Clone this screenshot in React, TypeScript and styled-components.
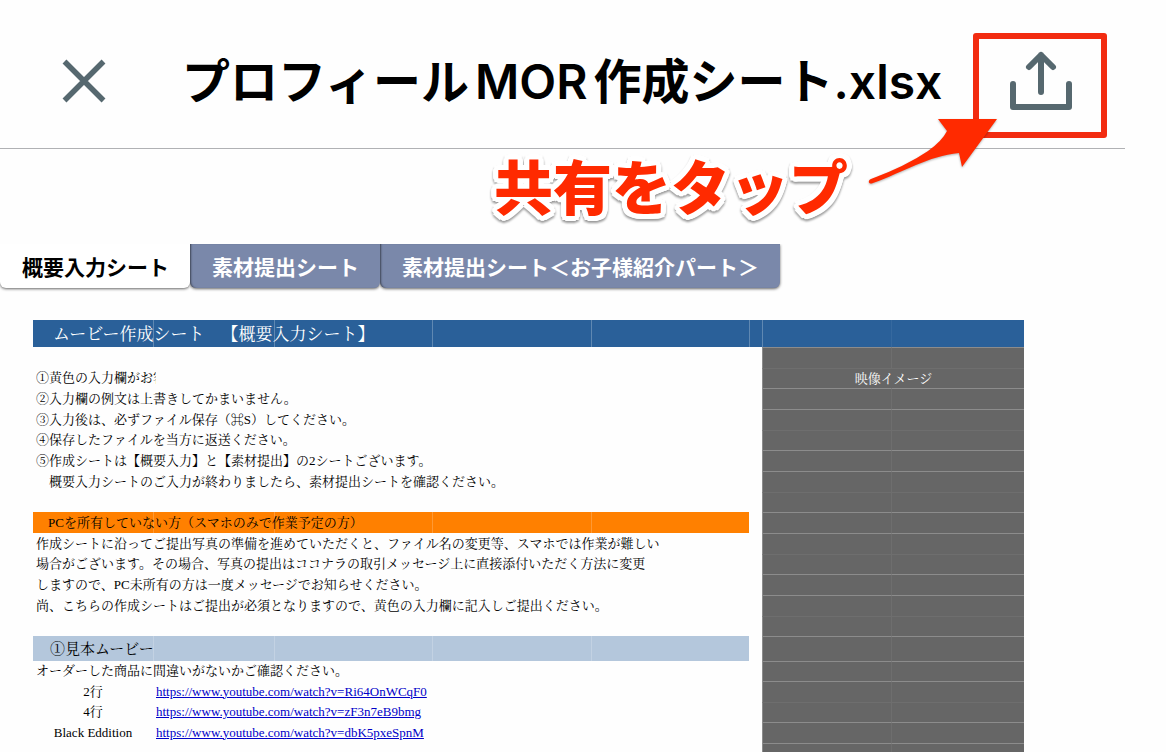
import React from "react";
import styled, { createGlobalStyle, css } from "styled-components";

const sans = `"Inter", "Noto Sans CJK JP", sans-serif`;
const serif = `"Liberation Serif", "Noto Serif CJK JP", "Noto Sans CJK JP", serif`;

const outline = Array.from({ length: 24 }, (_, i) => {
  const angle = (i * Math.PI) / 12;
  return `${Math.round(5 * Math.cos(angle))}px ${Math.round(5 * Math.sin(angle))}px 0 #fff`;
}).join(", ");

const GlobalStyle = createGlobalStyle`
  *, *::before, *::after { box-sizing: border-box; }
  body { margin: 0; background: #fefefe; color: #000; font-family: ${sans}; }
`;

const Page = styled.div`
  min-height: 100vh;
  overflow: hidden;
`;

const Header = styled.header`
  display: flex;
  align-items: center;
  height: 149px;
  margin-right: 41px;
  padding: 14px 53px 0 62px;
  border-bottom: 1px solid #b0b1b4;
`;

const IconButton = styled.button`
  display: block;
  padding: 0;
  border: 0;
  background: none;
  color: #56686f;
  line-height: 0;
`;

const FileName = styled.h1`
  flex: 1;
  margin: 0;
  padding: 2px 0 0 76px;
  font-size: 48px;
  font-weight: 600;
  line-height: 64px;
  white-space: nowrap;
`;

const Latin = styled.span`
  margin: 0 6px;
`;

const Share = styled.div`
  position: relative;
`;

const Frame = styled.div`
  position: absolute;
  inset: -17px -35px -26px -37px;
  border: 6px solid #f22c11;
  border-radius: 3px;
  pointer-events: none;
`;

const Pointer = styled.svg`
  position: absolute;
  top: 60px;
  right: 72px;
  filter: drop-shadow(0 1px 1px rgba(0, 0, 0, 0.3));
  pointer-events: none;
`;

const Callout = styled.p`
  margin: 0;
  height: 95px;
  padding-right: 318px;
  color: #ff2a00;
  font-size: 59px;
  font-weight: 900;
  line-height: 80px;
  text-align: right;
  white-space: nowrap;
  text-shadow: ${outline};
  filter: drop-shadow(0 2px 1px rgba(0, 0, 0, 0.4));
`;

const Tabs = styled.nav`
  display: flex;
  height: 44px;
`;

const Tab = styled.button<{ $active?: boolean }>`
  padding: 4px 21px 0 22px;
  border: 0;
  border-radius: 0 0 6px 6px;
  background: ${(p) => (p.$active ? "#fff" : "#7a88aa")};
  color: ${(p) => (p.$active ? "#000" : "#fff")};
  font-family: ${sans};
  font-size: 21px;
  font-weight: 700;
  line-height: 28px;
  white-space: nowrap;
  box-shadow: 0 1px 3px rgba(0, 0, 0, 0.6)
    ${(p) => !p.$active && css`, inset 2px 0 2px -1px rgba(0, 0, 0, 0.5)`};
  clip-path: inset(0 -4px -6px 0);
`;

const Sheet = styled.table`
  width: 85%;
  margin: 32px 0 0 33px;
  border-collapse: separate;
  border-spacing: 0;
  table-layout: fixed;
  font-family: ${serif};
  font-size: 13px;
  line-height: 18px;
  text-spacing-trim: space-all;
`;

type Kind = "title" | "notice" | "section" | "plain";

const fills: Record<Kind, string> = {
  title: "#2a6099",
  notice: "#ff8000",
  section: "#b4c7dc",
  plain: "transparent",
};

const Row = styled.tr<{ $height: number }>`
  height: ${(p) => p.$height}px;
`;

const Cell = styled.td<{ $kind?: Kind; $center?: boolean; $line?: boolean; $faint?: boolean }>`
  padding: 0 0 0 3px;
  background: ${(p) => fills[p.$kind ?? "plain"]};
  white-space: nowrap;
  vertical-align: middle;
  ${(p) => p.$center && css`text-align: center; padding: 0;`}
  ${(p) =>
    p.$line &&
    css`
      border-left: 1px solid
        rgba(255, 255, 255, ${p.$faint ? 0.06 : p.$kind === "title" ? 0.25 : 0.2});
    `}
  ${(p) =>
    p.$kind === "title" &&
    css`
      padding: 2px 0 0 20px;
      color: #fff;
      font-size: 17px;
      line-height: 24px;
    `}
  ${(p) => p.$kind === "notice" && css`padding-left: 15px;`}
  ${(p) =>
    p.$kind === "section" &&
    css`
      padding-left: 17px;
      font-size: 15px;
      line-height: 20px;
    `}
`;

const Overflow = styled.div`
  width: 0;
  white-space: pre;
`;

const Clip = styled.div`
  width: 120px;
  overflow: hidden;
`;

const Preview = styled.td<{ $faint: boolean; $split?: boolean }>`
  padding: 0;
  background: #666;
  color: #fff;
  text-align: center;
  border-top: 1px solid ${(p) => (p.$faint ? "#6e6e6e" : "#8c8c8c")};
  border-left: 1px solid ${(p) => (p.$split ? "#6e6e6e" : "#8c8c8c")};
`;

const Link = styled.a`
  color: #0000c8;
  text-decoration: underline;
`;

const columns = [120, 121, 158, 159, 158, 13, 129, 133];

type Line = {
  height: number;
  kind?: Kind;
  text?: string;
  clipped?: boolean;
  link?: string;
  preview?: string;
  faint?: boolean;
};

const lines: Line[] = [
  { height: 21 },
  { height: 20, text: "①黄色の入力欄がお客", clipped: true, preview: "映像イメージ", faint: true },
  { height: 21, text: "②入力欄の例文は上書きしてかまいません。" },
  { height: 21, text: "③入力後は、必ずファイル保存（⌘S）してください。" },
  { height: 20, text: "④保存したファイルを当方に返送ください。", faint: true },
  { height: 21, text: "⑤作成シートは【概要入力】と【素材提出】の2シートございます。" },
  { height: 21, text: "　概要入力シートのご入力が終わりましたら、素材提出シートを確認ください。" },
  { height: 20, faint: true },
  { height: 21, kind: "notice", text: "PCを所有していない方（スマホのみで作業予定の方）" },
  { height: 21, text: "作成シートに沿ってご提出写真の準備を進めていただくと、ファイル名の変更等、スマホでは作業が難しい" },
  { height: 20, text: "場合がございます。その場合、写真の提出はココナラの取引メッセージ上に直接添付いただく方法に変更", faint: true },
  { height: 21, text: "しますので、PC未所有の方は一度メッセージでお知らせください。" },
  { height: 21, text: "尚、こちらの作成シートはご提出が必須となりますので、黄色の入力欄に記入しご提出ください。" },
  { height: 20, faint: true },
  { height: 25, kind: "section", text: "①見本ムービー" },
  { height: 20, text: "オーダーした商品に間違いがないかご確認ください。" },
  { height: 21, text: "2行", link: "https://www.youtube.com/watch?v=Ri64OnWCqF0" },
  { height: 20, text: "4行", link: "https://www.youtube.com/watch?v=zF3n7eB9bmg", faint: true },
  { height: 21, text: "Black Eddition", link: "https://www.youtube.com/watch?v=dbK5pxeSpnM" },
  { height: 9 },
];

function Content({ line }: { line: Line }) {
  if (line.link) {
    return (
      <>
        <Cell $center>{line.text}</Cell>
        <Cell colSpan={4}>
          <Link href={line.link}>{line.link}</Link>
        </Cell>
      </>
    );
  }
  if (line.kind) {
    return (
      <>
        <Cell $kind={line.kind}>
          <Overflow>{line.text}</Overflow>
        </Cell>
        {[1, 2, 3, 4].map((n) => (
          <Cell key={n} $kind={line.kind} $line />
        ))}
      </>
    );
  }
  return <Cell colSpan={5}>{line.clipped ? <Clip>{line.text}</Clip> : line.text}</Cell>;
}

export default function App() {
  return (
    <Page>
      <GlobalStyle />
      <Header>
        <IconButton type="button" aria-label="閉じる">
          <svg width="44" height="44" viewBox="0 0 44 44" fill="none" stroke="currentColor" strokeWidth="5.500">
            <path d="M2.500 2.500 41.500 41.500M41.500 2.500 2.500 41.500" />
          </svg>
        </IconButton>
        <FileName>
          プロフィール<Latin>MOR</Latin>作成シート.xlsx
        </FileName>
        <Share>
          <IconButton type="button" aria-label="共有">
            <svg width="62" height="62" viewBox="0 0 62 62" fill="none" stroke="currentColor" strokeWidth="6" strokeLinecap="round" strokeLinejoin="round">
              <path d="M3 34V57H59V34" />
              <path d="M31 5V42M19 17 31 5 43 17" />
            </svg>
          </IconButton>
          <Frame />
          <Pointer width="138" height="76" viewBox="0 0 138 76" aria-hidden="true">
            <path fill="#ff2a00" d="M135 9 76 9 85 21Q80 31 66 41 44 56 9 69C5 71 7 75 11 73 42 62 66 46 97 43L100 57Z" />
          </Pointer>
        </Share>
      </Header>
      <Callout>共有をタップ</Callout>
      <Tabs aria-label="シート">
        <Tab type="button" $active>概要入力シート</Tab>
        <Tab type="button">素材提出シート</Tab>
        <Tab type="button">素材提出シート＜お子様紹介パート＞</Tab>
      </Tabs>
      <Sheet>
        <colgroup>
          {columns.map((width, i) => (
            <col key={i} width={width} />
          ))}
        </colgroup>
        <tbody>
          <Row $height={27}>
            <Cell $kind="title">
              <Overflow>ムービー作成シート　【概要入力シート】</Overflow>
            </Cell>
            {columns.slice(1).map((_, i) => (
              <Cell key={i} $kind="title" $line $faint={i === 6} />
            ))}
          </Row>
          {lines.map((line, i) => (
            <Row key={i} $height={line.height}>
              <Content line={line} />
              <Cell />
              {line.preview ? (
                <Preview colSpan={2} $faint>{line.preview}</Preview>
              ) : (
                <>
                  <Preview $faint={!!line.faint} />
                  <Preview $faint={!!line.faint} $split />
                </>
              )}
            </Row>
          ))}
        </tbody>
      </Sheet>
    </Page>
  );
}
